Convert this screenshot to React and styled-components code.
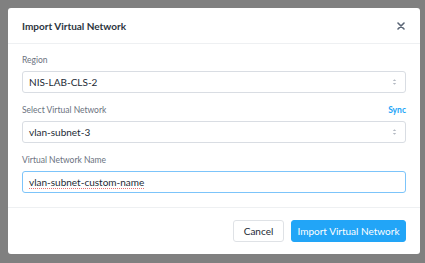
import React from 'react'
import styled, { createGlobalStyle } from 'styled-components'

const Global = createGlobalStyle`
  html, body {
    margin: 0;
    padding: 0;
    background: #808080;
    font-family: Lato, "Open Sans", sans-serif;
  }
`

const Backdrop = styled.div`
  width: 425px;
  height: 263px;
  padding: 8px 5px 9px 8px;
  box-sizing: border-box;
  background: #808080;
`

const Modal = styled.div`
  width: 412px;
  height: 246px;
  background: #fff;
  border-radius: 3px;
  display: flex;
  flex-direction: column;
`

const Header = styled.div`
  height: 35px;
  flex-shrink: 0;
  display: flex;
  align-items: center;
  justify-content: space-between;
  padding: 0 14px;
  border-bottom: 1px solid #eef0f2;
`

const Title = styled.h3`
  margin: 0;
  font-size: 10px;
  font-weight: 700;
  color: #2c3440;
`

const Close = styled.button`
  border: 0;
  background: none;
  padding: 0;
  width: 10px;
  height: 10px;
  display: flex;
  align-items: center;
  justify-content: center;
  cursor: pointer;
`

const Body = styled.div`
  padding: 11px 14px 14px;
  display: flex;
  flex-direction: column;
  gap: 12px;
  border-bottom: 1px solid #eef0f2;
`

const Field = styled.div`
  display: flex;
  flex-direction: column;
  gap: 6px;
`

const LabelRow = styled.div`
  display: flex;
  justify-content: space-between;
  align-items: baseline;
`

const Label = styled.label`
  font-size: 8.5px;
  line-height: 10px;
  color: #6b7280;
`

const Link = styled.a`
  font-size: 8.5px;
  line-height: 10px;
  font-weight: 700;
  color: #22a5f7;
  text-decoration: none;
`

const Box = styled.div`
  height: 22px;
  box-sizing: border-box;
  border: 1px solid ${({ focused }) => (focused ? '#7cc4fa' : '#d9dde3')};
  border-radius: 3px;
  display: flex;
  align-items: center;
  justify-content: space-between;
  padding: 0 8px 0 6px;
  font-size: 10px;
  color: #222a35;
`

const Value = styled.span`
  text-decoration: ${({ spell }) => (spell ? 'underline dotted #e57373' : 'none')};
  text-underline-offset: 2px;
`

const Footer = styled.div`
  flex: 1;
  display: flex;
  justify-content: flex-end;
  align-items: center;
  gap: 7px;
  padding: 0 14px;
`

const Button = styled.button`
  height: 22px;
  box-sizing: border-box;
  border-radius: 3px;
  font-family: Lato, "Open Sans", sans-serif;
  font-size: 10px;
  padding: 0;
  white-space: nowrap;
  border: 1px solid ${({ primary }) => (primary ? '#22a5f7' : '#dfe2e6')};
  background: ${({ primary }) => (primary ? '#22a5f7' : '#fff')};
  color: ${({ primary }) => (primary ? '#fff' : '#222a35')};
  width: ${({ w }) => w}px;
`

const Chevrons = () => (
  <svg width="5" height="8" viewBox="0 0 5 8">
    <path d="M0.8 3 L2.5 1.2 L4.2 3 Z" fill="#b3b9c2" />
    <path d="M0.8 5 L2.5 6.8 L4.2 5 Z" fill="#b3b9c2" />
  </svg>
)

const Select = ({ value }) => (
  <Box>
    <Value>{value}</Value>
    <Chevrons />
  </Box>
)

export default function App() {
  return (
    <>
      <Global />
      <Backdrop>
        <Modal>
          <Header>
            <Title>Import Virtual Network</Title>
            <Close>
              <svg width="8" height="8" viewBox="0 0 8 8">
                <path d="M1 1 L7 7 M7 1 L1 7" stroke="#5b6676" strokeWidth="1.6" strokeLinecap="round" />
              </svg>
            </Close>
          </Header>
          <Body>
            <Field>
              <Label>Region</Label>
              <Select value="NIS-LAB-CLS-2" />
            </Field>
            <Field>
              <LabelRow>
                <Label>Select Virtual Network</Label>
                <Link>Sync</Link>
              </LabelRow>
              <Select value="vlan-subnet-3" />
            </Field>
            <Field>
              <Label>Virtual Network Name</Label>
              <Box focused>
                <Value spell>vlan-subnet-custom-name</Value>
              </Box>
            </Field>
          </Body>
          <Footer>
            <Button w={51}>Cancel</Button>
            <Button primary w={115}>Import Virtual Network</Button>
          </Footer>
        </Modal>
      </Backdrop>
    </>
  )
}
